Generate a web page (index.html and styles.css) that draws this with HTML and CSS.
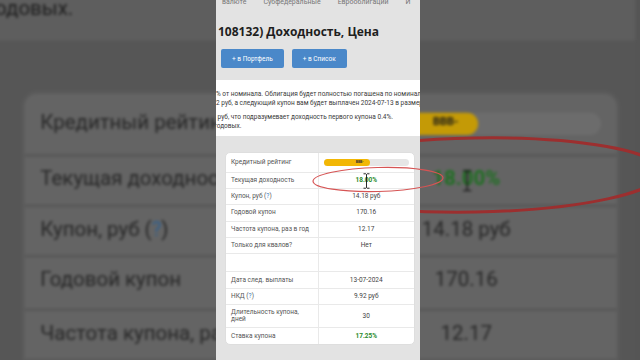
FILE: index.html
```html
<!DOCTYPE html>
<html lang="ru">

<head>
  <meta charset="UTF-8">
  <meta name="viewport" content="width=device-width, initial-scale=1.0">
  <title>Доходность, Цена</title>
  <link rel="stylesheet" href="styles.css">
</head>

<body>
  <div class="frame">

    <!-- Zoomed copy of the screen behind the phone -->
    <div class="backdrop" id="backdrop">
      <svg class="backdrop-mark" width="640" height="360" viewBox="0 0 640 360">
        <ellipse cx="475" cy="175" rx="187" ry="37" transform="rotate(-1 475 175)" />
      </svg>
    </div>

    <!-- Phone screen -->
    <div class="phone" id="phone">
      <div class="tabs">
        <span>валюте</span>
        <span>Субфедеральные</span>
        <span>Еврооблигации</span>
        <span>И</span>
      </div>

      <h1 class="title">108132) Доходность, Цена</h1>

      <div class="actions">
        <button class="btn">+ в Портфель</button>
        <button class="btn">+ в Список</button>
      </div>

      <div class="note">
        <p>% от номинала. Облигация будет полностью погашена по номиналу</p>
        <p>2 руб, а следующий купон вам будет выплачен 2024-07-13 в размере</p>
        <p class="gap">&nbsp;руб, что подразумевает доходность первого купона 0.4%.</p>
        <p class="cut">годовых.</p>
      </div>

      <div class="card">
        <table class="info-table">
          <tr class="row-first">
            <td>Кредитный рейтинг</td>
            <td class="value">
              <div class="rating"><div class="rating-fill">BBB-</div></div>
            </td>
          </tr>
          <tr>
            <td>Текущая доходность</td>
            <td class="value">
              <span class="positive">18.00%</span>
              <svg class="cursor" width="7" height="16" viewBox="0 0 7 16">
                <path d="M0.5 0.8h2.3l0.7 0.7l0.7-0.7h2.3M3.5 1.5v13M0.5 15.2h2.3l0.7-0.7l0.7 0.7h2.3" />
              </svg>
            </td>
          </tr>
          <tr>
            <td>Купон, руб (<span class="help">?</span>)</td>
            <td class="value">14.18 руб</td>
          </tr>
          <tr>
            <td>Годовой купон</td>
            <td class="value">170.16</td>
          </tr>
          <tr>
            <td>Частота купона, раз в год</td>
            <td class="value">12.17</td>
          </tr>
          <tr>
            <td>Только для квалов?</td>
            <td class="value">Нет</td>
          </tr>
          <tr class="row-blank">
            <td></td>
            <td class="value"></td>
          </tr>
          <tr>
            <td>Дата след. выплаты</td>
            <td class="value">13-07-2024</td>
          </tr>
          <tr>
            <td>НКД (<span class="help">?</span>)</td>
            <td class="value">9.92 руб</td>
          </tr>
          <tr class="row-tall">
            <td>Длительность купона,<br>дней</td>
            <td class="value">30</td>
          </tr>
          <tr>
            <td>Ставка купона</td>
            <td class="value"><span class="positive">17.25%</span></td>
          </tr>
        </table>
      </div>
    </div>

    <!-- Red marker drawn around the yield -->
    <svg class="mark" width="150" height="40" viewBox="0 0 150 40">
      <ellipse cx="78" cy="19.5" rx="65" ry="12" transform="rotate(-1.5 78 19.5)" />
    </svg>

  </div>

  <script src="script.js"></script>
</body>

</html>
```

FILE: styles.css
```css
* {
  box-sizing: border-box;
}

body {
  margin: 0;
  background: #2b2b2b;
  font-family: Roboto, "Liberation Sans", sans-serif;
}

/* Video frame */
.frame {
  position: relative;
  width: 640px;
  height: 360px;
  overflow: hidden;
  display: flex;
}

/* Zoomed background */
.backdrop {
  position: absolute;
  top: 0;
  left: 0;
  width: 100%;
  height: 100%;
  background: #555;
  overflow: hidden;
}

.backdrop-mark {
  position: absolute;
  top: 0;
  left: 0;
}

.backdrop-mark ellipse {
  fill: none;
  stroke: #9c2f2f;
  stroke-width: 3;
}

/* Phone screen */
.phone {
  position: relative;
  flex: none;
  width: 204px;
  height: 360px;
  margin-left: 216px;
  background: #e3e3e3;
  overflow: hidden;
}

/* Tabs */
.tabs {
  display: flex;
  gap: 17px;
  margin-top: -3px;
  padding-left: 6px;
  height: 10px;
  line-height: 10px;
  font-size: 7px;
  color: #777;
  white-space: nowrap;
}

/* Title */
.title {
  margin: 17px 0 0;
  padding-left: 2px;
  font-family: "Open Sans", Roboto, sans-serif;
  font-size: 12px;
  font-weight: bold;
  line-height: 16px;
  color: #1e1e1e;
  white-space: nowrap;
}

/* Buttons */
.actions {
  display: flex;
  gap: 8px;
  margin-top: 9px;
  padding-left: 5px;
}

.btn {
  height: 19px;
  padding: 0 11px;
  border: none;
  border-radius: 2px;
  background: #4a88c9;
  color: white;
  font-family: Roboto, sans-serif;
  font-size: 6.5px;
}

/* Description */
.note {
  margin-top: 12px;
  padding: 10px 0 5px;
  background: #fff;
  font-size: 6.5px;
  line-height: 9px;
  color: #3a3a3a;
}

.note p {
  margin: 0;
  white-space: nowrap;
}

.note .gap {
  margin-top: 5px;
}

.note .cut {
  margin-left: -2px;
}

/* Info card */
.card {
  margin: 16px 5px 0 9px;
  background: #fff;
  border: 1px solid #dedede;
  border-radius: 5px;
  overflow: hidden;
}

.info-table {
  width: 100%;
  border-collapse: collapse;
  font-size: 6.5px;
  color: #555;
}

.info-table tr {
  height: 16.4px;
}

.info-table .row-first {
  height: 19px;
}

.info-table .row-blank {
  height: 18px;
}

.info-table .row-tall {
  height: 23px;
}

.info-table td {
  padding: 0 5px;
  border-bottom: 1px solid #e9e9e9;
  line-height: 7px;
  vertical-align: middle;
}

.info-table tr:last-child td {
  border-bottom: none;
}

.info-table .value {
  position: relative;
  width: 96px;
  border-left: 1px solid #e9e9e9;
  text-align: center;
  color: #444;
}

.help {
  color: #3b7dc4;
}

.positive {
  color: #2a8a2a;
  font-weight: bold;
}

/* Rating bar */
.rating {
  width: 85px;
  height: 7px;
  margin: 0 auto;
  background: #e6e6e6;
  border-radius: 4px;
}

.rating-fill {
  display: flex;
  align-items: center;
  justify-content: flex-end;
  width: 46px;
  height: 100%;
  padding-right: 6px;
  background: #f2b705;
  border-radius: 4px;
  font-size: 3.5px;
  font-weight: bold;
  color: #333;
}

/* Text cursor */
.cursor {
  position: absolute;
  top: 0;
  left: 44px;
}

.cursor path {
  fill: none;
  stroke: #111;
  stroke-width: 0.9;
}

/* Hand-drawn marker */
.mark {
  position: absolute;
  top: 160px;
  left: 300px;
}

.mark ellipse {
  fill: none;
  stroke: #d65454;
  stroke-width: 1.2;
}

/* Zoomed, dimmed copy behind the phone */
.phone.phone-zoomed {
  position: absolute;
  top: -388px;
  left: -7px;
  margin: 0;
  background: #565656;
  transform: scale(3.15);
  transform-origin: 0 0;
  filter: blur(0.45px);
}

.phone-zoomed .note {
  background: #5e5e5e;
  color: #1c1c1c;
}

.phone-zoomed .card {
  background: #646464;
  border-color: #5a5a5a;
}

.phone-zoomed .info-table {
  color: #262626;
}

.phone-zoomed .info-table td {
  border-color: #595959;
}

.phone-zoomed .info-table .value {
  color: #262626;
}

.phone-zoomed .help {
  color: #2f5f8f;
}

.phone-zoomed .positive {
  color: #1f6f22;
}

.phone-zoomed .rating {
  background: #6c6c6c;
}

.phone-zoomed .rating-fill {
  background: #c49a06;
  color: #1a1a1a;
}

.phone-zoomed .cursor {
  top: 4px;
  left: 46px;
  transform: scale(0.44);
  transform-origin: 0 0;
}
```

FILE: script.js
```js
// zoomed, dimmed copy of the phone screen for the background
const phone = document.getElementById('phone');
const copy = phone.cloneNode(true);
copy.removeAttribute('id');
copy.classList.add('phone-zoomed');
document.getElementById('backdrop').prepend(copy);
```
